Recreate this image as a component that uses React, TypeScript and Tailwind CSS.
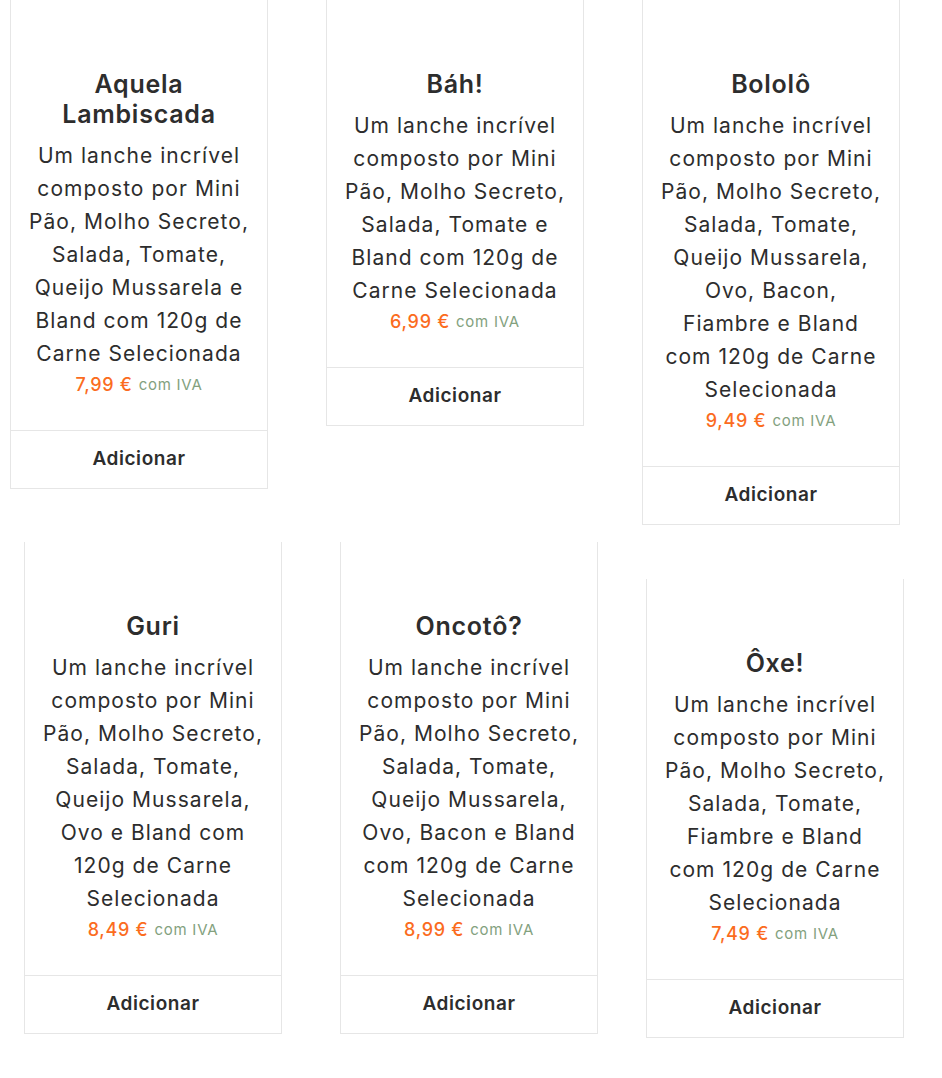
import React from 'react';

interface Product {
  title: string[];
  desc: string[];
  price: string;
}

const row1: Product[] = [
  {
    title: ['Aquela', 'Lambiscada'],
    desc: [
      'Um lanche incrível',
      'composto por Mini',
      'Pão, Molho Secreto,',
      'Salada, Tomate,',
      'Queijo Mussarela e',
      'Bland com 120g de',
      'Carne Selecionada',
    ],
    price: '7,99 €',
  },
  {
    title: ['Báh!'],
    desc: [
      'Um lanche incrível',
      'composto por Mini',
      'Pão, Molho Secreto,',
      'Salada, Tomate e',
      'Bland com 120g de',
      'Carne Selecionada',
    ],
    price: '6,99 €',
  },
  {
    title: ['Bololô'],
    desc: [
      'Um lanche incrível',
      'composto por Mini',
      'Pão, Molho Secreto,',
      'Salada, Tomate,',
      'Queijo Mussarela,',
      'Ovo, Bacon,',
      'Fiambre e Bland',
      'com 120g de Carne',
      'Selecionada',
    ],
    price: '9,49 €',
  },
];

const row2: Product[] = [
  {
    title: ['Guri'],
    desc: [
      'Um lanche incrível',
      'composto por Mini',
      'Pão, Molho Secreto,',
      'Salada, Tomate,',
      'Queijo Mussarela,',
      'Ovo e Bland com',
      '120g de Carne',
      'Selecionada',
    ],
    price: '8,49 €',
  },
  {
    title: ['Oncotô?'],
    desc: [
      'Um lanche incrível',
      'composto por Mini',
      'Pão, Molho Secreto,',
      'Salada, Tomate,',
      'Queijo Mussarela,',
      'Ovo, Bacon e Bland',
      'com 120g de Carne',
      'Selecionada',
    ],
    price: '8,99 €',
  },
  {
    title: ['Ôxe!'],
    desc: [
      'Um lanche incrível',
      'composto por Mini',
      'Pão, Molho Secreto,',
      'Salada, Tomate,',
      'Fiambre e Bland',
      'com 120g de Carne',
      'Selecionada',
    ],
    price: '7,49 €',
  },
];

const ProductCard: React.FC<{ p: Product; className?: string }> = ({ p, className = '' }) => (
  <div className={`w-[258px] shrink-0 flex flex-col border-x border-b border-[#e6e6e6] bg-white ${className}`}>
    <div className="pt-[69px] pb-[32px] px-2 text-center">
      <h3 className="text-[25px] leading-[30px] font-semibold tracking-[0.03em] text-[#2d2d2d]">
        {p.title.map((t) => (
          <div key={t} className="whitespace-nowrap">{t}</div>
        ))}
      </h3>
      <div className="mt-[10px] text-[21px] leading-[33px] tracking-[0.05em] text-[#2d2d2d]">
        {p.desc.map((d) => (
          <div key={d} className="whitespace-nowrap">{d}</div>
        ))}
      </div>
      <div className="h-[28px] flex items-center justify-center gap-[6px]">
        <span className="text-[18px] font-medium tracking-[0.04em] text-[#fb6c1e]">{p.price}</span>
        <span className="text-[15px] tracking-[0.05em] text-[#83a17e] mt-[2px]">com IVA</span>
      </div>
    </div>
    <div className="h-[58px] border-t border-[#e6e6e6] flex items-center justify-center">
      <span className="text-[19px] font-semibold tracking-[0.03em] text-[#2d2d2d]">Adicionar</span>
    </div>
  </div>
);

export default function App() {
  return (
    <div className="w-[942px] min-h-[1078px] bg-white font-['Inter',sans-serif]">
      <div className="flex items-start pl-[10px] gap-[58px]">
        {row1.map((p) => (
          <ProductCard key={p.price} p={p} />
        ))}
      </div>
      <div className="flex items-start pl-[24px] mt-[17px]">
        <ProductCard p={row2[0]} />
        <ProductCard p={row2[1]} className="ml-[58px]" />
        <ProductCard p={row2[2]} className="ml-[48px] mt-[37px]" />
      </div>
    </div>
  );
}
